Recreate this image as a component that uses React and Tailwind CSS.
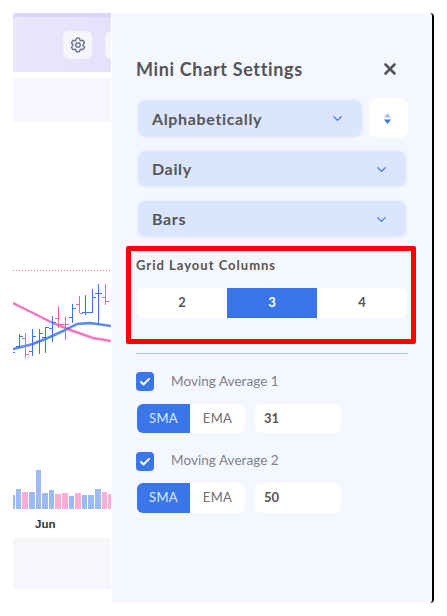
import React from "react";
import { HiOutlineCog6Tooth } from "react-icons/hi2";
import { ChevronDown, Check, X } from "lucide-react";

const BLUE = "#3b76e8";
const PINK = "#f25fb4";
// [colour, x, top, bottom, leftTickY, rightTickY] in page pixels
const bars = [
  ["b", 19, 334, 348, 346, 336],
  ["p", 25, 333, 358, 338, 354],
  ["b", 32, 329, 356, 351, 336],
  ["b", 39, 329, 354, 341, 333],
  ["b", 45, 327, 353, 337, 327],
  ["b", 52, 316, 342, 328, 322],
  ["p", 58, 306, 328, 318, 324],
  ["p", 65, 317, 340, 324, 324],
  ["b", 72, 304, 323, 317, 308],
  ["p", 79, 296, 313, 304, 313],
  ["b", 85, 295, 315, 312, 312],
  ["b", 92, 289, 313, 312, 297],
  ["b", 98, 284, 324, 293, 293],
  ["p", 105, 284, 305, 297, 301],
];
const vols = [
  [13, 15, 495, "b"], [16, 21, 489, "b"], [22, 28, 492, "p"], [29, 35, 492, "b"],
  [36, 41, 470, "b"], [42, 48, 493, "b"], [49, 54, 490, "b"], [55, 61, 494, "p"],
  [62, 68, 493, "p"], [69, 74, 496, "b"], [75, 81, 493, "p"], [82, 87, 495, "b"],
  [88, 94, 495, "b"], [95, 101, 489, "b"], [102, 107, 492, "p"], [108, 111, 494, "p"],
];

function Chart() {
  return (
    <svg className="block" width="98" height="388" viewBox="13 122 98 388">
      <line x1="13" x2="111" y1="270.5" y2="270.5" stroke={PINK} strokeWidth="1" strokeDasharray="1 2" />
      <polyline fill="none" stroke={PINK} strokeWidth="2.5" opacity="0.85" points="13,303 33,313 53,323 73,331 93,338 111,341" />
      <polyline fill="none" stroke={BLUE} strokeWidth="2.5" opacity="0.85" points="13,349 33,344 50,337 63,331 77,324 90,323 111,326" />
      {bars.map(([c, x, t, b, l, r], i) => {
        const col = c === "b" ? BLUE : PINK;
        return (
          <g key={i} stroke={col} strokeWidth="1">
            <line x1={x + 0.5} x2={x + 0.5} y1={t} y2={b} />
            <line x1={x - 3} x2={x} y1={l + 0.5} y2={l + 0.5} />
            <line x1={x + 1} x2={x + 4} y1={r + 0.5} y2={r + 0.5} />
          </g>
        );
      })}
      <line x1="13" x2="15" y1="352.5" y2="352.5" stroke={BLUE} />
      {vols.map(([a, b, t, c], i) => (
        <rect key={i} x={a} y={t} width={b - a} height={509 - t} fill={c === "b" ? "#9dbbf3" : "#fbadd6"} />
      ))}
    </svg>
  );
}

function Select({ label, className = "" }) {
  return (
    <div className={`flex items-center justify-between rounded-[10px] border-2 border-[#edf3ff] bg-[#dbe6fe] pl-[14px] pr-[17px] ${className}`}>
      <span className="text-[16px] font-bold tracking-[0.65px] text-[#555]">{label}</span>
      <ChevronDown size={15} strokeWidth={2} color={BLUE} />
    </div>
  );
}

function Toggle({ value, className = "" }) {
  return (
    <div className={`flex gap-[10px] ${className}`}>
      <div className="flex w-[108px] overflow-hidden rounded-[6px] bg-white text-[13px] tracking-[0.3px]">
        <span className="flex w-[53px] items-center justify-center bg-[#3b76e8] text-[#dfe9fd]">SMA</span>
        <span className="flex flex-1 items-center justify-center text-[#707070]">EMA</span>
      </div>
      <div className="flex w-[86px] items-center rounded-[6px] bg-white pl-[9px] text-[13px] font-bold text-[#555]">
        {value}
      </div>
    </div>
  );
}

function Checkline({ label, className = "", labelClass = "" }) {
  return (
    <div className={`flex h-[19px] items-center ${className}`}>
      <span className="flex h-[19px] w-[18px] items-center justify-center rounded-[4px] bg-[#3b76e8]">
        <Check size={12} strokeWidth={4} color="#fff" />
      </span>
      <span className={`ml-[17px] text-[13.5px] tracking-[0.05px] text-[#808088] ${labelClass}`}>{label}</span>
    </div>
  );
}

export default function App() {
  return (
    <div className="flex h-[616px] w-[447px] bg-white pl-[13px] pt-[13px] [font-family:Lato,'Noto_Sans',sans-serif]">
      <div className="w-[98px] shrink-0 overflow-hidden">
        <div className="h-[59px] overflow-hidden rounded-tl-[4px] bg-gradient-to-r from-[#ece6fc] to-[#e6e0fb]">
          <div className="h-[4px] bg-[#dcd4fc]" />
          <div className="ml-[50px] mt-[14px] flex gap-[13px]">
            <div className="flex h-[28px] w-[29px] shrink-0 items-center justify-center rounded-[6px] bg-[#f5f5fa]">
              <HiOutlineCog6Tooth size={18} color="#6f7892" strokeWidth={2} />
            </div>
            <div className="h-[28px] w-[29px] shrink-0 rounded-[6px] bg-[#f5f5fa]" />
          </div>
        </div>
        <div className="mt-[6px] h-[44px] bg-[#f6f7fe]" />
        <Chart />
        <div className="mt-[7px] h-[14px] pl-[22px] text-[11.5px] font-bold leading-[14px] text-[#333] [font-family:'Liberation_Sans',sans-serif]">Jun</div>
        <div className="mt-[7px] h-[51px] bg-[#f6f6fd]">
          <div className="h-[5px] bg-[#f6f6f6]" />
        </div>
      </div>
      <div className="ml-px h-[590px] w-[322px] shrink-0 rounded-[4px] border-r-2 border-black bg-[#f4f7ff] pl-[24px] pr-[24px] pt-[44px]">
        <div className="flex h-[24px] items-center justify-between pr-[9px]">
          <span className="text-[18px] font-bold tracking-[0.65px] text-[#555]">Mini Chart Settings</span>
          <X size={18} strokeWidth={3.5} color="#555" />
        </div>
        <div className="mt-[17px] flex gap-[5px]">
          <Select label="Alphabetically" className="h-[41px] w-[228px]" />
          <div className="flex h-[40px] w-[39px] items-center justify-center rounded-[8px] bg-white">
            <svg width="7" height="11" viewBox="0 0 7 11" className="mr-[2px]">
              <path d="M3.5 0 L7 4.5 H0 Z" fill="#a9bfee" />
              <path d="M0 6.5 H7 L3.5 11 Z" fill={BLUE} />
            </svg>
          </div>
        </div>
        <Select label="Daily" className="mt-[10px] h-[40px]" />
        <Select label="Bars" className="mt-[10px] h-[40px]" />
        <div className="-ml-[10px] -mr-[8px] mt-[7px] h-[98px] rounded-[2px] border-[5px] border-[#fe0000] pl-[5px] pt-[6px]">
          <div className="h-[16px] text-[13px] font-bold leading-[16px] tracking-[1px] text-[#555]">Grid Layout Columns</div>
          <div className="ml-px mt-[15px] flex h-[30px] w-[270px] overflow-hidden rounded-[6px] bg-white text-[13px] font-bold text-[#555]">
            <span className="flex flex-1 items-center justify-center">2</span>
            <span className="flex flex-1 items-center justify-center bg-[#3b76e8] text-white">3</span>
            <span className="flex flex-1 items-center justify-center">4</span>
          </div>
        </div>
        <div className="mt-[9px] h-px bg-[#a9c1f3]" />
        <Checkline label="Moving Average 1" className="mt-[18px]" labelClass="mb-[1px]" />
        <Toggle value="31" className="ml-px mt-[13px] h-[29px]" />
        <Checkline label="Moving Average 2" className="mt-[19px]" labelClass="mb-[3px]" />
        <Toggle value="50" className="ml-px mt-[12px] h-[30px]" />
      </div>
    </div>
  );
}
